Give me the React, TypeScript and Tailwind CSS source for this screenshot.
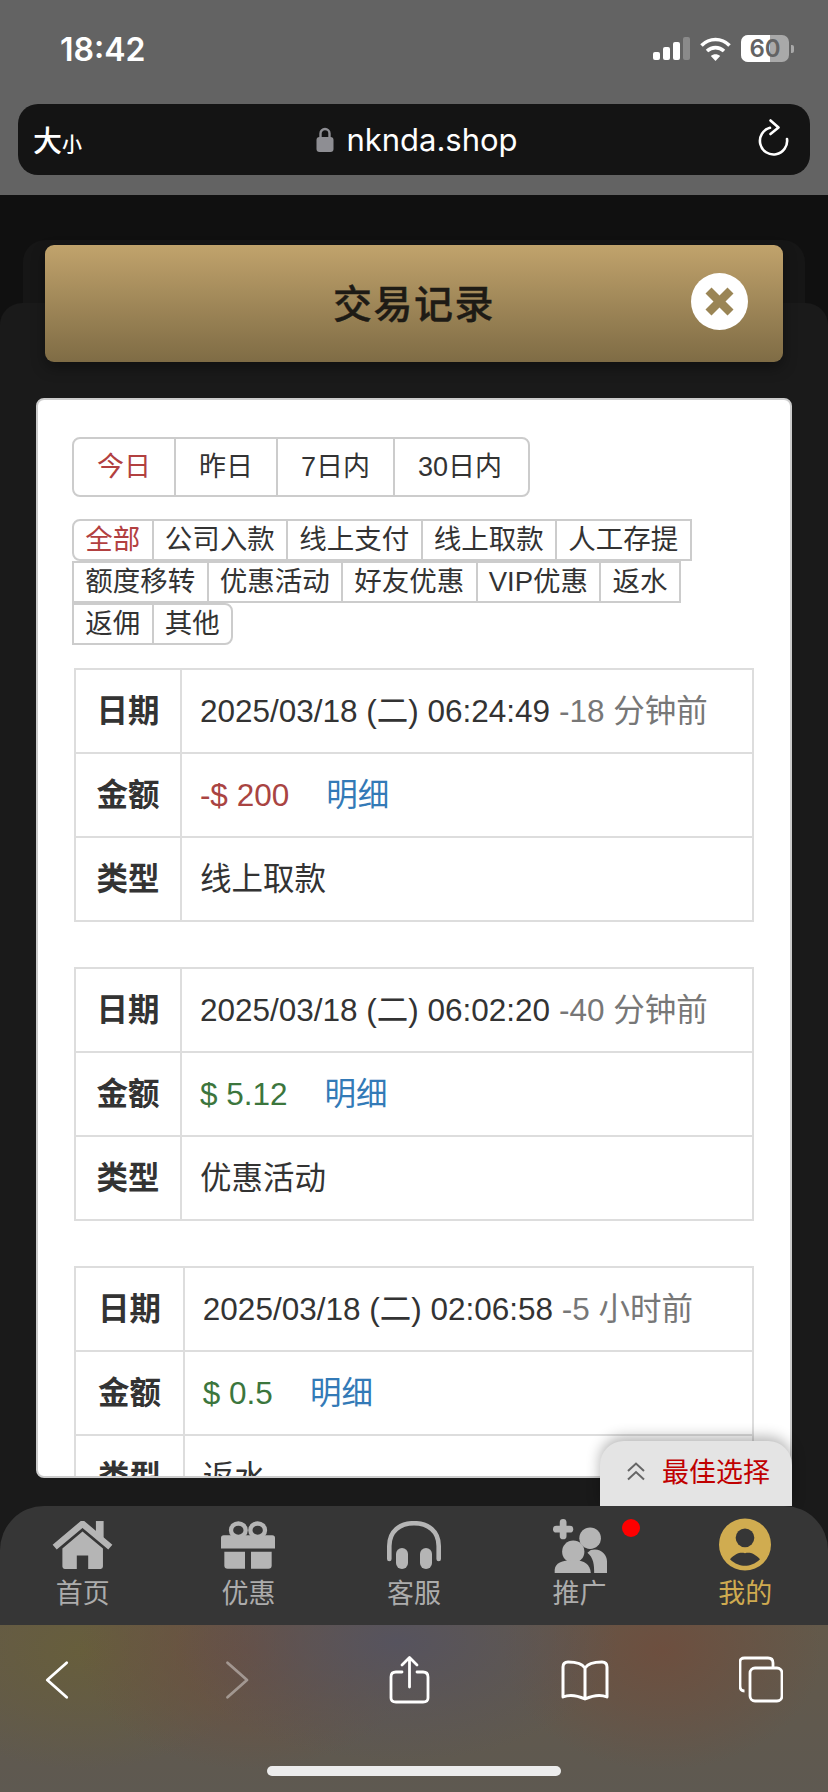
import React from 'react';

const dayTabs = ['今日', '昨日', '7日内', '30日内'];

const filters = [
  ['全部', '公司入款', '线上支付', '线上取款', '人工存提'],
  ['额度移转', '优惠活动', '好友优惠', 'VIP优惠', '返水'],
  ['返佣', '其他'],
];

const records = [
  { date: '2025/03/18 (二) 06:24:49', ago: '-18 分钟前', amount: '-$ 200', color: 'text-[#a94442]', type: '线上取款' },
  { date: '2025/03/18 (二) 06:02:20', ago: '-40 分钟前', amount: '$ 5.12', color: 'text-[#3c763d]', type: '优惠活动' },
  { date: '2025/03/18 (二) 02:06:58', ago: '-5 小时前', amount: '$ 0.5', color: 'text-[#3c763d]', type: '返水' },
];

const HomeIcon = () => (
  <svg width="61" height="48" viewBox="0 0 182 143" fill="#b5b5b5">
    <rect x="131" y="0" width="23" height="50" />
    <path d="M8 78 L91 8 L174 78" fill="none" stroke="#b5b5b5" strokeWidth="19" strokeLinejoin="miter" />
    <path d="M31 82 L91 31 L152 82 V136 Q152 143 145 143 H108 V103 H74 V143 H38 Q31 143 31 136 Z" />
  </svg>
);

const GiftIcon = () => (
  <svg width="54" height="48" viewBox="0 0 162 143" fill="#b5b5b5">
    <ellipse cx="52" cy="27" rx="22" ry="20" fill="none" stroke="#b5b5b5" strokeWidth="13" />
    <ellipse cx="110" cy="27" rx="22" ry="20" fill="none" stroke="#b5b5b5" strokeWidth="13" />
    <path d="M8 42 H154 Q162 42 162 50 V82 H0 V50 Q0 42 8 42 Z" />
    <path d="M10 92 H72 V143 H20 Q10 143 10 133 Z" />
    <path d="M90 92 H152 V133 Q152 143 142 143 H90 Z" />
  </svg>
);

const HeadsetIcon = () => (
  <svg width="54" height="48" viewBox="0 0 54 48" fill="#b5b5b5">
    <path d="M2.3 38 V25 C2.3 10 13 2.2 27 2.2 C41 2.2 51.7 10 51.7 25 V38" fill="none" stroke="#b5b5b5" strokeWidth="4.6" strokeLinecap="round" />
    <rect x="9" y="27" width="12" height="21" rx="6" />
    <rect x="33" y="27" width="12" height="21" rx="6" />
  </svg>
);

const UsersIcon = () => (
  <svg width="54" height="54" viewBox="0 0 160 160" fill="#b5b5b5">
    <rect x="0" y="20" width="60" height="20" rx="10" />
    <rect x="20" y="0" width="20" height="60" rx="10" />
    <circle cx="110" cy="57" r="32" />
    <path d="M112 92 C140 84 160 105 160 125 V160 H122 C122 135 120 115 102 100 Z" />
    <circle cx="60" cy="97" r="33" />
    <path d="M5 160 V150 C7 130 25 122 60 122 C95 122 110 135 112 160 Z" />
  </svg>
);

const MeIcon = () => (
  <svg width="52" height="53" viewBox="0 0 156 156">
    <circle cx="78" cy="78" r="78" fill="#d0ac50" />
    <circle cx="78" cy="58" r="28" fill="#363636" />
    <path d="M33 122 C50 104 64 100 78 104 C92 100 106 104 123 122 C108 136 92 142 78 142 C64 142 48 136 33 122 Z" fill="#363636" />
  </svg>
);

const navItems = [
  { label: '首页', icon: <HomeIcon />, top: 'pt-[15px]' },
  { label: '优惠', icon: <GiftIcon />, top: 'pt-[15px]' },
  { label: '客服', icon: <HeadsetIcon />, top: 'pt-[15px]' },
  { label: '推广', icon: <UsersIcon />, top: 'pt-[13px]', dot: true },
  { label: '我的', icon: <MeIcon />, top: 'pt-[12px]', active: true },
];

const StatusBar = () => (
  <div className="flex h-[104px] items-start justify-between pl-[60px] pr-[34px] pt-[32px]">
    <span className="font-['Inter',sans-serif] text-[32px] font-semibold leading-[36px] text-white">18:42</span>
    <div className="flex items-center pt-[3px]">
      <div className="flex items-end gap-[3px]">
        <div className="h-[8px] w-[7px] rounded-[2px] bg-white" />
        <div className="h-[13px] w-[7px] rounded-[2px] bg-white" />
        <div className="h-[18px] w-[7px] rounded-[2px] bg-white" />
        <div className="h-[23px] w-[7px] rounded-[2px] bg-[#8a8a8a]" />
      </div>
      <svg className="ml-[10px]" width="31" height="24" viewBox="0 0 31 24" fill="none" stroke="#fff" strokeWidth="3.6">
        <path d="M1.5 8.5 C9.5 .5 21.5 .5 29.5 8.5" />
        <path d="M7 14 C12 9.5 19 9.5 24 14" />
        <path d="M15.5 24 L10.8 19 C13.5 16.8 17.5 16.8 20.2 19 Z" fill="#fff" stroke="none" />
      </svg>
      <div className="relative ml-[10px] flex h-[27px] w-[48px] items-center justify-center rounded-[7px] bg-[#a9a9a9]">
        <div className="absolute inset-y-0 left-0 w-[29px] rounded-l-[7px] bg-white" />
        <span className="relative font-['Inter',sans-serif] text-[24px] font-semibold leading-[27px] text-[#636363]">60</span>
      </div>
      <div className="ml-[2px] h-[8px] w-[3px] rounded-r-[2px] bg-[#a9a9a9]" />
    </div>
  </div>
);

const AddressBar = () => (
  <div className="relative mx-[18px] flex h-[71px] items-center justify-center rounded-[20px] bg-[#141414] pl-[6px]">
    <div className="absolute left-[15px] top-[21px] flex items-end font-['Noto_Sans_CJK_SC',sans-serif] font-medium leading-none text-white">
      <span className="text-[29px]">大</span>
      <span className="text-[20px]">小</span>
    </div>
    <svg className="mr-[12px]" width="18" height="25" viewBox="0 0 18 25" fill="#8e8e93">
      <path d="M4.5 11 V6.5 A4.5 4.5 0 0 1 13.5 6.5 V11" fill="none" stroke="#8e8e93" strokeWidth="2.4" />
      <rect x="0.5" y="10" width="17" height="15" rx="3" />
    </svg>
    <span className="font-['Inter',sans-serif] text-[31px] leading-none text-white">nknda.shop</span>
    <svg className="absolute right-[20px] top-[15px]" width="32" height="38" viewBox="0 0 32 38" fill="none" stroke="#fff" strokeWidth="2.6" strokeLinecap="round" strokeLinejoin="round">
      <path d="M12 8.8 A13.6 13.6 0 1 0 29 20" />
      <path d="M12.5 1.5 L20.5 8.5 L12.5 15" />
    </svg>
  </div>
);

const DayTabs = () => (
  <div className="flex w-fit overflow-hidden rounded-[8px] border-2 border-[#ccc] text-[27px] leading-[38px]">
    {dayTabs.map((tab, i) => (
      <div
        key={tab}
        className={`border-[#ccc] py-[9px] pl-[23px] ${i === 3 ? 'pr-[26px]' : 'pr-[23px]'} ${i > 0 ? 'border-l-2' : ''} ${i === 0 ? 'text-[#b24040]' : 'text-[#333]'}`}
      >
        {tab}
      </div>
    ))}
  </div>
);

const FilterRows = () => (
  <div className="mt-[22px] flex flex-col text-[27.5px] leading-[38px]">
    {filters.map((row, r) => (
      <div key={r} className="flex">
        {row.map((item, i) => (
          <div
            key={item}
            className={`border-2 border-[#ccc] px-[11.25px] ${i > 0 ? '-ml-[2px]' : ''} ${item === '全部' ? 'rounded-l-[8px] text-[#b24040]' : 'text-[#333]'} ${item === '其他' ? 'rounded-r-[8px]' : ''}`}
          >
            {item}
          </div>
        ))}
      </div>
    ))}
  </div>
);

const RecordTable = ({ record }: { record: (typeof records)[number] }) => (
  <table className="mb-[45px] ml-[2px] w-[680px] border-collapse text-[31.5px] leading-[44px] text-[#333]">
    <tbody>
      <tr>
        <th className="border-2 border-[#ddd] px-[18px] py-[19px] font-bold">日期</th>
        <td className="border-2 border-[#ddd] px-[18px] py-[19px]">
          {record.date} <span className="text-[#777]">{record.ago}</span>
        </td>
      </tr>
      <tr>
        <th className="border-2 border-[#ddd] px-[18px] py-[19px] font-bold">金额</th>
        <td className="border-2 border-[#ddd] px-[18px] py-[19px]">
          <span className={record.color}>{record.amount}</span>
          <span className="ml-[37px] text-[#337ab7]">明细</span>
        </td>
      </tr>
      <tr>
        <th className="border-2 border-[#ddd] px-[18px] py-[19px] font-bold">类型</th>
        <td className="border-2 border-[#ddd] px-[18px] py-[19px]">{record.type}</td>
      </tr>
    </tbody>
  </table>
);

const BottomNav = () => (
  <nav className="relative z-10 grid h-[119px] shrink-0 grid-cols-5 rounded-t-[44px] bg-[#363636]">
    {navItems.map((item) => (
      <div key={item.label} className="relative flex flex-col items-center">
        <div className={`h-[70px] ${item.top}`}>{item.icon}</div>
        <span className={`text-[27px] leading-[36px] ${item.active ? 'text-[#cfab50]' : 'text-[#acacac]'}`}>{item.label}</span>
        {item.dot && <div className="absolute left-[125px] top-[13px] h-[18px] w-[18px] rounded-full bg-[#f00]" />}
      </div>
    ))}
  </nav>
);

const BrowserToolbar = () => (
  <div className="relative h-[167px] shrink-0 bg-[#5e5950] bg-[radial-gradient(ellipse_220px_120px_at_48%_10%,#56535e_0%,transparent_100%),radial-gradient(ellipse_160px_120px_at_80%_15%,#6d4f3f_0%,transparent_100%),radial-gradient(ellipse_170px_120px_at_30%_15%,#6b5040_0%,transparent_100%),radial-gradient(ellipse_180px_120px_at_10%_15%,#675e3c_0%,transparent_100%),linear-gradient(180deg,#63594a,#5e5951)]">
    <div className="flex justify-between pl-[35px] pr-[45px] pt-[30px]">
      <svg width="44" height="50" viewBox="0 0 44 50" fill="none" stroke="#fff" strokeWidth="2.8" strokeLinecap="round" strokeLinejoin="round">
        <path d="M31.7 7.7 L12.3 25 L31.7 42.3" />
      </svg>
      <svg width="44" height="50" viewBox="0 0 44 50" fill="none" stroke="#fff" strokeOpacity="0.4" strokeWidth="2.8" strokeLinecap="round" strokeLinejoin="round">
        <path d="M16.5 7.7 L36 25 L16.5 42.3" />
      </svg>
      <svg width="44" height="50" viewBox="0 0 44 50" fill="none" stroke="#fff" strokeWidth="2.8" strokeLinecap="round" strokeLinejoin="round">
        <path d="M15 17 H9 Q4 17 4 22 V43 Q4 47 9 47 H36 Q41 47 41 43 V22 Q41 17 36 17 H30" />
        <path d="M22.5 32 V3 M15 10 L22.5 2.5 L30 10" />
      </svg>
      <svg className="-mx-[3px]" width="50" height="50" viewBox="0 0 50 50" fill="none" stroke="#fff" strokeWidth="3" strokeLinecap="round" strokeLinejoin="round">
        <path d="M25 13 C22 8 16 7 8 7 Q3 7 3 12 V42 Q12 38 25 44 Q38 38 47 42 V12 Q47 7 42 7 C34 7 28 8 25 13 V43" />
      </svg>
      <svg width="44" height="50" viewBox="0 0 44 50" fill="none" stroke="#fff" strokeWidth="2.8" strokeLinejoin="round">
        <path d="M5.5 36 Q1 36 1 31 V7 Q1 3 5.5 3 H29 Q34 3 34 8 V12" />
        <rect x="11" y="13" width="32" height="33" rx="5" />
      </svg>
    </div>
    <div className="absolute bottom-[16px] left-[267px] h-[10px] w-[294px] rounded-full bg-[#ececec]" />
  </div>
);

export default function App() {
  return (
    <div className="flex h-[1792px] w-[828px] flex-col overflow-hidden bg-[#101010] font-['Liberation_Sans','Noto_Sans_CJK_SC',sans-serif]">
      <header className="h-[195px] shrink-0 bg-[#636363]">
        <StatusBar />
        <AddressBar />
      </header>

      <main className="relative flex-1 overflow-hidden pt-[50px]">
        {/* the two dark panels that sit behind the modal */}
        <div className="absolute left-[23px] right-[23px] top-[45px] h-[120px] rounded-t-[22px] bg-[#161616]" />
        <div className="absolute inset-x-0 bottom-0 top-[108px] rounded-t-[22px] bg-[#1a1a1a]" />

        <div className="relative mx-[45px] flex h-[117px] items-center justify-center rounded-[9px] bg-gradient-to-b from-[#c1a36c] to-[#7f6c45] pb-[4px] shadow-[0_6px_14px_rgba(0,0,0,0.35)]">
          <span className="font-['Noto_Sans_CJK_SC',sans-serif] text-[39px] font-medium tracking-[1.5px] text-[#1e1b15] [-webkit-text-stroke:0.4px_#1e1b15]">交易记录</span>
          <svg className="absolute right-[35px] top-[28px]" width="57" height="57" viewBox="0 0 57 57">
            <circle cx="28.5" cy="28.5" r="28.5" fill="#fff" />
            <path d="M20.5 14.5 L28.5 22.5 L36.5 14.5 L42.5 20.5 L34.5 28.5 L42.5 36.5 L36.5 42.5 L28.5 34.5 L20.5 42.5 L14.5 36.5 L22.5 28.5 L14.5 20.5 Z" fill="#9a8555" />
          </svg>
        </div>

        <div className="relative ml-[36px] mt-[36px] h-[1080px] w-[756px] overflow-hidden rounded-[8px] border-2 border-[#ccc] bg-white pl-[34px] pt-[37px]">
          <DayTabs />
          <FilterRows />
          <div className="mt-[23px]">
            {records.map((record) => (
              <RecordTable key={record.date} record={record} />
            ))}
          </div>
        </div>

        <div className="absolute bottom-[119px] left-[600px] flex h-[65px] w-[192px] items-start rounded-t-[24px] bg-[#e4e4e4] pl-[26px] pt-[16px] shadow-[0_-4px_14px_rgba(0,0,0,0.3)]">
          <svg className="mt-[5px]" width="20" height="19" viewBox="0 0 20 19" fill="none" stroke="#666" strokeWidth="2">
            <path d="M2 9 L10 1.5 L18 9 M2 17.5 L10 10 L18 17.5" />
          </svg>
          <span className="ml-[16px] text-[27px] leading-[32px] text-[#c00000]">最佳选择</span>
        </div>
      </main>

      <div className="-mt-[119px] shrink-0">
        <BottomNav />
      </div>
      <BrowserToolbar />
    </div>
  );
}
